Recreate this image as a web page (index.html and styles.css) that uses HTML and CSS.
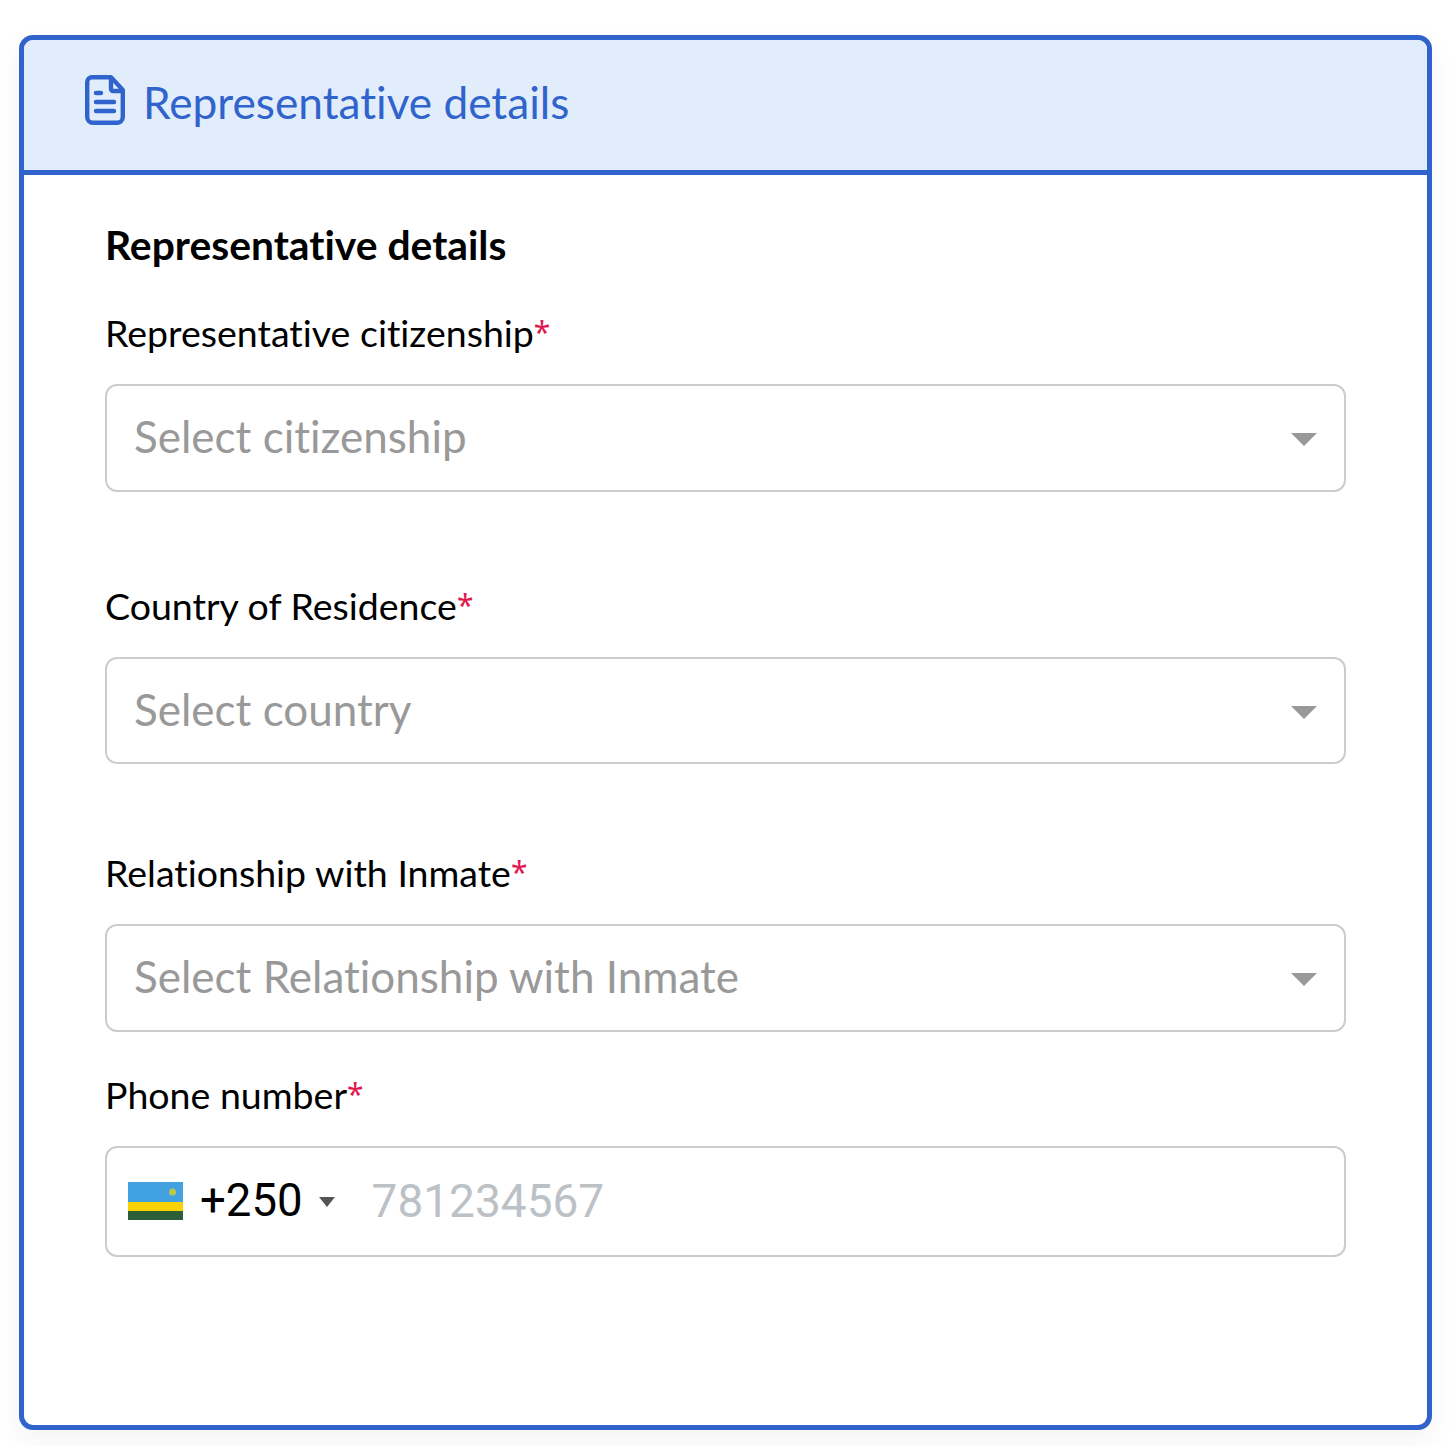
FILE: index.html
```html
<!DOCTYPE html>
<html lang="en">
<head>
<meta charset="utf-8">
<title>Representative details</title>
<link rel="stylesheet" href="styles.css">
</head>
<body>
<section class="card">
  <header class="card-head">
    <svg class="doc-icon" viewBox="0 0 40 50" width="40" height="50" aria-hidden="true">
      <path d="M7 2.200H26L37.800 15V42A5.800 5.800 0 0 1 32 47.800H8A5.800 5.800 0 0 1 2.200 42V7A4.800 4.800 0 0 1 7 2.200Z" fill="none" stroke="#3163cc" stroke-width="4.400" stroke-linejoin="round"/>
      <path d="M26 2V14A2 2 0 0 0 28 16H38" fill="none" stroke="#3163cc" stroke-width="4.400"/>
      <path d="M11 18H16M11 27H29M11 36H29" fill="none" stroke="#3163cc" stroke-width="4.400" stroke-linecap="round"/>
    </svg>
    <h1 class="head-title">Representative details</h1>
  </header>
  <div class="card-body">
    <h2 class="section-title">Representative details</h2>

    <div class="field field-a">
      <label class="field-label">Representative citizenship<span class="req">*</span></label>
      <div class="select"><span class="placeholder">Select citizenship</span><span class="caret"></span></div>
    </div>

    <div class="field field-b">
      <label class="field-label">Country of Residence<span class="req">*</span></label>
      <div class="select"><span class="placeholder">Select country</span><span class="caret"></span></div>
    </div>

    <div class="field field-c">
      <label class="field-label">Relationship with Inmate<span class="req">*</span></label>
      <div class="select"><span class="placeholder">Select Relationship with Inmate</span><span class="caret"></span></div>
    </div>

    <div class="field field-d">
      <label class="field-label">Phone number<span class="req">*</span></label>
      <div class="phone">
        <svg class="flag" viewBox="0 0 55 38" width="55" height="38" aria-hidden="true">
          <rect width="55" height="20" fill="#42a1e0"/>
          <rect y="20" width="55" height="9" fill="#fad201"/>
          <rect y="29" width="55" height="9" fill="#2a5f38"/>
          <circle cx="44.500" cy="10" r="3.500" fill="#b9c94a"/>
        </svg>
        <span class="dial">+250</span>
        <span class="dial-caret"></span>
        <span class="phone-ph">781234567</span>
      </div>
    </div>
  </div>
</section>
</body>
</html>
```
FILE: styles.css
```css
* { box-sizing: border-box; }
html, body { margin: 0; padding: 0; background: #fff; }
body {
  height: 1446px;
  padding: 35px 20px 16px 19px;
  font-family: "Lato", "Noto Sans", sans-serif;
  font-variant-ligatures: none;
  overflow: hidden;
}
.card {
  height: 1395px;
  border: 5px solid #3163cc;
  border-radius: 14px;
  box-shadow: 0 10px 30px rgba(0, 0, 0, .05);
  background: #fff;
}
.card-head {
  height: 135px;
  background: #e1edfa;
  border-bottom: 5px solid #3163cc;
  border-radius: 9px 9px 0 0;
  padding-left: 61px;
  display: flex;
  align-items: center;
  gap: 18px;
}
.doc-icon { flex: none; margin-top: -10px; }
.head-title {
  margin: -8px 0 0;
  font-size: 44.200px;
  font-weight: 400;
  color: #3163cc;
}
.card-body { padding: 47px 81px 0; }
.section-title {
  margin: 0;
  font-size: 40.800px;
  line-height: 46px;
  font-weight: 700;
  color: #000;
}
.field-a { margin-top: 42px; }
.field-b { margin-top: 91px; }
.field-c { margin-top: 86px; }
.field-d { margin-top: 40px; }
.field-label {
  display: block;
  font-size: 37.500px;
  line-height: 46px;
  color: #000;
}
.req {
  font-family: "Noto Sans", sans-serif;
  font-size: 30px;
  line-height: 0;
  vertical-align: 4px;
  color: #e0184d;
}
.select {
  margin-top: 28px;
  height: 108px;
  border: 2px solid #cccccc;
  border-radius: 12px;
  padding: 0 27px;
  display: flex;
  align-items: center;
  justify-content: space-between;
}
.field-b .select { height: 107px; }
.placeholder { margin-top: -4px; font-size: 44px; color: #999999; }
.caret {
  width: 0;
  height: 0;
  margin-top: 3px;
  border-left: 13px solid transparent;
  border-right: 13px solid transparent;
  border-top: 13px solid #999999;
}
.phone {
  margin-top: 28px;
  height: 111px;
  border: 2px solid #cccccc;
  border-radius: 12px;
  padding-left: 21px;
  display: flex;
  align-items: center;
}
.flag { flex: none; margin-top: -2px; }
.dial { margin-top: -2px; margin-left: 17px; font-family: "Roboto", sans-serif; font-size: 45.500px; color: #000; }
.dial-caret {
  margin-left: 16px;
  width: 0;
  height: 0;
  border-left: 8.500px solid transparent;
  border-right: 8.500px solid transparent;
  border-top: 10px solid #555;
}
.phone-ph { margin-top: -2px; margin-left: 37px; font-family: "Roboto", sans-serif; font-size: 46px; color: #bcc1c6; }
```
